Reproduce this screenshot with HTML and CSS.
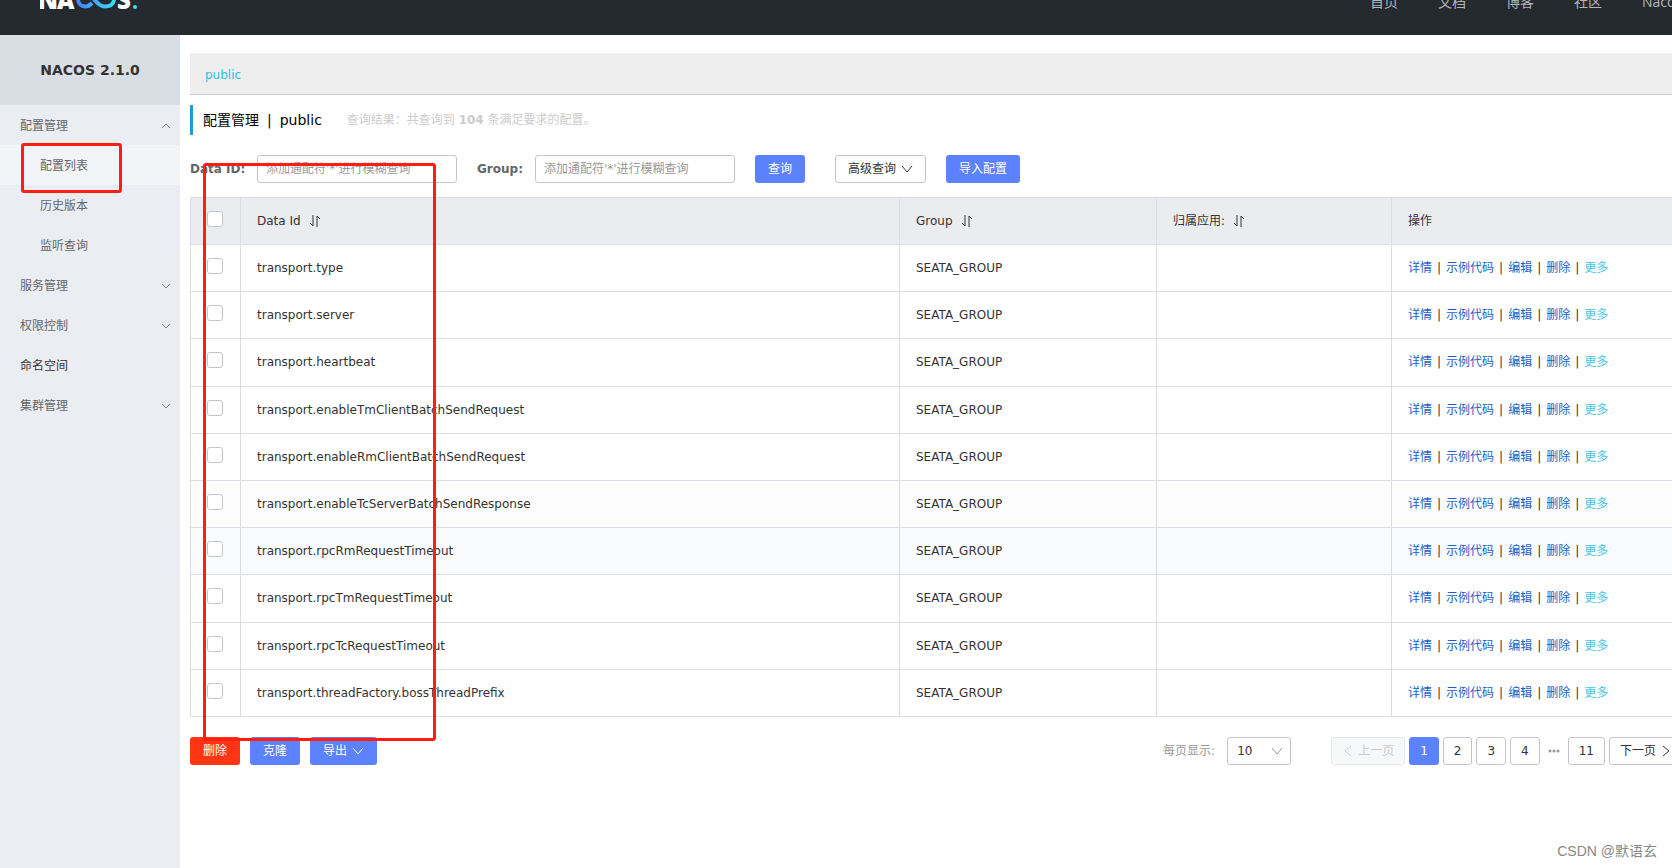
FILE: index.html
```html
<!DOCTYPE html>
<html lang="zh-CN">
<head>
<meta charset="utf-8">
<title>Nacos</title>
<link rel="stylesheet" href="styles.css">
</head>
<body>
<header class="topbar">
  <a class="logo" href="#" aria-label="Nacos">
    <svg width="100" height="26" viewBox="0 0 100 26">
      <defs><linearGradient id="loop" x1="36" y1="0" x2="76" y2="0" gradientUnits="userSpaceOnUse"><stop offset="0" stop-color="#4a7dff"/><stop offset="1" stop-color="#36e1f0"/></linearGradient></defs>
      <text class="logo-text" x="-2" y="20">N</text>
      <text class="logo-text" x="17" y="20">A</text>
      <path class="loop" d="M52 14C50 16 49 17.500 46 17.500C41 17.500 38 14 38 10C38 6 41 2 46 2C50 2 52 6 54 10C57 14 60 17.500 65 17.500C71 17.500 74 14 74 10C74 6 71 2 66 2C63 2 61 3 59 6"/>
      <text class="logo-text" x="77" y="20">S</text>
      <circle cx="95" cy="18" r="2" fill="#36e1f0"/>
    </svg>
  </a>
  <nav class="topnav">
    <a href="#">首页</a><a href="#">文档</a><a href="#">博客</a><a href="#">社区</a><a class="cut" href="#">Nacos</a>
  </nav>
</header>
<div class="shell">
  <aside class="sidebar">
    <h1 class="product">NACOS 2.1.0</h1>
    <nav class="menu" id="menu">
      <a class="item" href="#">配置管理<svg class="chev" viewBox="0 0 10 6"><path d="M1 5L5 1L9 5"/></svg></a>
      <a class="item sub active" href="#">配置列表</a>
      <a class="item sub" href="#">历史版本</a>
      <a class="item sub" href="#">监听查询</a>
      <a class="item" href="#">服务管理<svg class="chev" viewBox="0 0 10 6"><path d="M1 1L5 5L9 1"/></svg></a>
      <a class="item" href="#">权限控制<svg class="chev" viewBox="0 0 10 6"><path d="M1 1L5 5L9 1"/></svg></a>
      <a class="item strong" href="#">命名空间</a>
      <a class="item" href="#">集群管理<svg class="chev" viewBox="0 0 10 6"><path d="M1 1L5 5L9 1"/></svg></a>
    </nav>
    <div class="mark mark-menu"></div>
  </aside>
  <main class="content">
    <div class="spaces"><a href="#">public</a></div>
    <div class="heading"><h2><span>配置管理</span><span>|</span><span>public</span></h2><p>查询结果：共查询到 <b>104</b> 条满足要求的配置。</p></div>
    <form class="search">
      <label for="dataid">Data ID:</label><input class="field" id="dataid" type="text" placeholder="添加通配符'*'进行模糊查询">
      <label class="second" for="group">Group:</label><input class="field" id="group" type="text" placeholder="添加通配符'*'进行模糊查询">
      <button class="btn primary query" type="button">查询</button>
      <button class="btn plain" type="button">高级查询<svg class="caret" viewBox="0 0 12 8"><path d="M1 1L6 7L11 1"/></svg></button>
      <button class="btn primary import" type="button">导入配置</button>
    </form>
    <table class="grid">
      <colgroup><col class="c-check"><col><col class="c-group"><col class="c-app"><col class="c-ops"></colgroup>
      <thead><tr><th><input type="checkbox" aria-label="全选"></th><th>Data Id<svg class="sort" viewBox="0 0 12 12"><path d="M4 0V11L1 8M8 12V1L11 4"/></svg></th><th>Group<svg class="sort" viewBox="0 0 12 12"><path d="M4 0V11L1 8M8 12V1L11 4"/></svg></th><th>归属应用:<svg class="sort" viewBox="0 0 12 12"><path d="M4 0V11L1 8M8 12V1L11 4"/></svg></th><th>操作</th></tr></thead>
      <tbody id="rows"></tbody>
    </table>
    <footer class="foot">
      <button class="btn danger" type="button">删除</button>
      <button class="btn primary" type="button">克隆</button>
      <button class="btn primary" type="button">导出<svg class="caret" viewBox="0 0 12 8"><path d="M1 1L6 7L11 1"/></svg></button>
      <label class="size-label" for="size">每页显示:</label>
      <span class="size"><select id="size"><option>10</option></select><svg class="caret" viewBox="0 0 12 8"><path d="M1 1L6 7L11 1"/></svg></span>
      <nav class="pager">
        <button class="page prev" type="button" disabled><svg class="arrow" viewBox="0 0 8 12"><path d="M7 1L1 6L7 11"/></svg>上一页</button>
        <button class="page current" type="button">1</button>
        <button class="page" type="button">2</button>
        <button class="page" type="button">3</button>
        <button class="page" type="button">4</button>
        <svg class="dots" viewBox="0 0 12 4"><circle cx="2" cy="2" r="1.5"/><circle cx="6" cy="2" r="1.5"/><circle cx="10" cy="2" r="1.5"/></svg>
        <button class="page" type="button">11</button>
        <button class="page next" type="button">下一页<svg class="arrow" viewBox="0 0 8 12"><path d="M1 1L7 6L1 11"/></svg></button>
      </nav>
    </footer>
    <div class="mark mark-table"></div>
  </main>
</div>
<div class="watermark">CSDN @默语玄</div>
<script src="app.js"></script>
</body>
</html>
```
FILE: styles.css
```css
* { box-sizing: border-box; }
html { overflow: hidden; }
body { margin: 0; min-height: 100vh; display: flex; flex-direction: column; overflow: hidden; background: #fff; color: #333; font: 12px/18px "DejaVu Sans", "Noto Sans CJK SC", sans-serif; }
a { text-decoration: none; color: inherit; }
h1, h2, p { margin: 0; }
button, input, select { font: inherit; color: inherit; }
svg path { fill: none; stroke: currentColor; }

.topbar { flex: none; height: 66px; margin-top: -31px; background: #252a2f; display: flex; align-items: center; justify-content: space-between; padding-left: 40px; }
.logo, .logo svg { display: block; }
.logo-text { font: 800 24px "Open Sans", sans-serif; fill: #fff; }
.logo .loop { stroke: url(#loop); stroke-width: 4; }
.topnav { display: flex; gap: 40px; font: 14px/20px "Open Sans", "Noto Sans CJK SC", sans-serif; color: #b4b7b9; }
.cut { width: 30px; overflow: hidden; }

.shell { flex: 1; display: flex; }
.sidebar { position: relative; flex: none; width: 180px; background: #eaedf2; }
.product { height: 70px; background: #d9dde4; text-align: center; font-size: 14px; line-height: 70px; }
.item { height: 40px; display: flex; align-items: center; justify-content: space-between; padding: 2px 9px 0 20px; color: #666; }
.sub { padding-left: 40px; }
.active { background: #f2f4f7; }
.strong { color: #333; }
.chev { width: 10px; height: 6px; color: #888; }

.content { position: relative; flex: 1; min-width: 0; margin-right: -9px; padding: 18px 0 0 10px; }
.spaces { height: 42px; background: #eee; border-bottom: 1px solid #ccc; padding-left: 15px; line-height: 44px; color: #33bde0; }
.heading { display: flex; align-items: center; height: 30px; margin-top: 10px; border-left: 3px solid #209bcc; padding-left: 10px; }
.heading h2 { display: flex; gap: 8px; font-size: 14px; font-weight: 400; color: #000; }
.heading p { margin-left: 25px; color: #ccc; }
.search { display: flex; align-items: center; margin-top: 20px; }
.search label { width: 67px; font-weight: 700; color: #666; }
.search .second { width: 58px; margin-left: 20px; }
.field { width: 200px; height: 28px; padding: 0 8px; border: 1px solid #c4c6cf; border-radius: 3px; background: #fff; }
.field::placeholder { color: #999; opacity: 1; }
.btn { display: flex; align-items: center; gap: 5px; height: 28px; padding: 0 12px; border: 1px solid transparent; border-radius: 3px; color: #fff; white-space: nowrap; }
.primary { background: #5c82ff; }
.danger { background: #ff3516; }
.plain { border-color: #c4c6cf; background: #fff; color: #333; }
.query { margin: 0 30px 0 20px; }
.import { margin-left: 20px; }
.caret { width: 12px; height: 8px; }

.grid { width: 100%; height: 520px; margin-top: 14px; border-collapse: collapse; table-layout: fixed; }
.grid th, .grid td { border: 1px solid #dcdee3; padding: 0 16px; text-align: left; font-weight: 400; }
.grid th { height: 47px; background: #ebecf0; }
.grid .near { background: #fcfcfc; }
.grid .hover { background: #fafbfd; }
.c-check { width: 50px; }
.c-group { width: 257px; }
.c-app { width: 235px; }
.c-ops { width: 289px; }
.grid input { appearance: none; display: block; width: 16px; height: 16px; margin: 0 0 4px; border: 1px solid #c4c6cf; border-radius: 3px; background: #fff; }
.sort { width: 12px; height: 12px; margin-left: 8px; vertical-align: -2px; }
.ops { white-space: nowrap; }
.ops a { color: #1a5fc8; }
.ops .more { color: #46c5e6; }
.ops i { font-style: normal; margin: 0 5px; }

.foot { display: flex; align-items: center; gap: 10px; margin-top: 20px; }
.size-label { margin: 0 2px 0 auto; color: #999; }
.size { position: relative; width: 64px; }
.size select { appearance: none; display: block; width: 100%; height: 28px; padding: 0 9px; border: 1px solid #c4c6cf; border-radius: 3px; background: #fff; }
.size .caret { position: absolute; right: 8px; top: 10px; color: #999; pointer-events: none; }
.pager { display: flex; align-items: center; gap: 4px; margin-left: 30px; }
.page { display: flex; align-items: center; justify-content: center; gap: 6px; height: 28px; padding: 0 10px; border: 1px solid #c4c6cf; border-radius: 3px; background: #fff; white-space: nowrap; }
.prev { padding: 0 10px 0 12px; border-color: #e6e7eb; background: #f7f8fa; color: #ccc; }
.current { border-color: #5c82ff; background: #5c82ff; color: #fff; }
.arrow { width: 8px; height: 12px; }
.dots { width: 12px; height: 4px; margin: 0 4px; fill: #999; }

.mark { position: absolute; border: 3px solid #ff1e12; border-radius: 3px; pointer-events: none; }
.mark-menu { left: 21px; top: 108px; width: 101px; height: 50px; }
.mark-table { left: 23px; top: 128px; width: 233px; height: 578px; }
.watermark { position: absolute; right: 15px; bottom: 7px; font: 14px/20px "Liberation Sans", "Noto Sans CJK SC", sans-serif; color: #888; }
```
FILE: app.js
```js
const ids = [
  "transport.type", "transport.server", "transport.heartbeat",
  "transport.enableTmClientBatchSendRequest", "transport.enableRmClientBatchSendRequest",
  "transport.enableTcServerBatchSendResponse", "transport.rpcRmRequestTimeout",
  "transport.rpcTmRequestTimeout", "transport.rpcTcRequestTimeout",
  "transport.threadFactory.bossThreadPrefix"
];
const tone = { 5: "near", 6: "hover" };
document.getElementById("rows").innerHTML = ids.map((id, n) => `
  <tr class="${tone[n] || ""}">
    <td><input type="checkbox" aria-label="${id}"></td>
    <td>${id}</td><td>SEATA_GROUP</td><td></td>
    <td class="ops"><a href="#">详情</a><i>|</i><a href="#">示例代码</a><i>|</i><a href="#">编辑</a><i>|</i><a href="#">删除</a><i>|</i><a class="more" href="#">更多</a></td>
  </tr>`).join("");
```
